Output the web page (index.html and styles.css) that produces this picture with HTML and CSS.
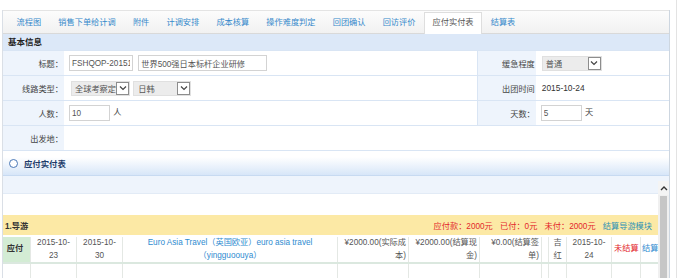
FILE: index.html
```html
<!DOCTYPE html>
<html lang="zh-CN">
<head>
<meta charset="UTF-8">
<title>应付实付表</title>
<link rel="stylesheet" href="styles.css">
</head>
<body>
<div class="page">
    <div class="tabs">
        <span class="tab">流程图</span>
        <span class="tab">销售下单给计调</span>
        <span class="tab">附件</span>
        <span class="tab">计调安排</span>
        <span class="tab">成本核算</span>
        <span class="tab">操作难度判定</span>
        <span class="tab">回团确认</span>
        <span class="tab">回访评价</span>
        <span class="tab active">应付实付表</span>
        <span class="tab">结算表</span>
    </div>

    <div class="panel-title">基本信息</div>
    <table class="form">
        <tr>
            <td class="lbl">标题：</td>
            <td class="val">
                <input class="ipt w-code" type="text" value="FSHQOP-201510">
                <input class="ipt w-name" type="text" value="世界500强日本标杆企业研修">
            </td>
            <td class="lbl lbl-r">缓急程度</td>
            <td class="val">
                <span class="sel w-level"><span class="sel-text">普通</span><span class="arrow"><svg width="8" height="6" viewBox="0 0 8 6"><path d="M1 1.5 L4 4.5 L7 1.5" fill="none" stroke="#444" stroke-width="1.2"/></svg></span></span>
            </td>
        </tr>
        <tr>
            <td class="lbl">线路类型：</td>
            <td class="val">
                <span class="sel w-type"><span class="sel-text">全球考察定制</span><span class="arrow"><svg width="8" height="6" viewBox="0 0 8 6"><path d="M1 1.5 L4 4.5 L7 1.5" fill="none" stroke="#444" stroke-width="1.2"/></svg></span></span>
                <span class="sel w-area"><span class="sel-text">日韩</span><span class="arrow"><svg width="8" height="6" viewBox="0 0 8 6"><path d="M1 1.5 L4 4.5 L7 1.5" fill="none" stroke="#444" stroke-width="1.2"/></svg></span></span>
            </td>
            <td class="lbl lbl-r">出团时间</td>
            <td class="val date">2015-10-24</td>
        </tr>
        <tr>
            <td class="lbl">人数：</td>
            <td class="val"><input class="ipt w-num" type="text" value="10"> 人</td>
            <td class="lbl lbl-r">天数：</td>
            <td class="val"><input class="ipt w-num" type="text" value="5"> 天</td>
        </tr>
        <tr>
            <td class="lbl">出发地：</td>
            <td class="val" colspan="3"></td>
        </tr>
    </table>

    <div class="sub-title"><span class="ring"></span>应付实付表</div>

    <div class="scroll-area">
        <div class="scroll-content">
            <div class="band"></div>
            <div class="blank"></div>
            <div class="group-head">
                <span class="group-name">1.导游</span>
                <span class="group-sum">
                    <span class="money">应付款：2000元</span>
                    <span class="money">已付：0元</span>
                    <span class="money">未付：2000元</span>
                    <a class="link">结算导游模块</a>
                </span>
            </div>
            <table class="pay">
                <tr>
                    <td class="kind">应付</td>
                    <td class="c-date">2015-10-<br>23</td>
                    <td class="c-date">2015-10-<br>30</td>
                    <td class="c-name">Euro Asia Travel（英国欧亚）euro asia travel<br>（yingguoouya）</td>
                    <td class="c-amt">¥2000.00(实际成<br>本)</td>
                    <td class="c-amt2">¥2000.00(结算现<br>金)</td>
                    <td class="c-amt3">¥0.00(结算签<br>单)</td>
                    <td class="c-gap"></td>
                    <td class="c-who">吉<br>红</td>
                    <td class="c-date2">2015-10-<br>24</td>
                    <td class="c-state">未结算</td>
                    <td class="c-op"><a class="link-blue">结算</a></td>
                </tr>
                <tr class="row-next">
                    <td class="kind plain"></td>
                    <td class="c-date"></td>
                    <td class="c-date"></td>
                    <td class="c-name"></td>
                    <td class="c-amt"></td>
                    <td class="c-amt2"></td>
                    <td class="c-amt3"></td>
                    <td class="c-gap"></td>
                    <td class="c-who"></td>
                    <td class="c-date2"></td>
                    <td class="c-state"></td>
                    <td class="c-op"></td>
                </tr>
            </table>
        </div>
        <div class="scrollbar">
            <div class="sb-up"><svg width="8" height="5" viewBox="0 0 8 5"><path d="M1 4 L4 1 L7 4" fill="none" stroke="#333" stroke-width="1.4"/></svg></div>
            <div class="sb-thumb"></div>
        </div>
    </div>
</div>
<div class="edge"></div>
</body>
</html>
```

FILE: styles.css
```css
body {
    margin: 0;
    font-family: "Liberation Sans", "Noto Sans CJK SC", sans-serif;
    font-size: 8.2px;
    color: #333;
    background: #fff;
    display: flex;
    height: 278px;
    overflow: hidden;
}

.page {
    width: 666px;
    margin-left: 2px;
    margin-top: 10px;
    border-left: 1px solid #dadfe6;
    border-right: 1px solid #cdd6e0;
    display: flex;
    flex-direction: column;
}

.edge {
    margin-left: 6px;
    width: 1px;
    background: #e3e3e3;
}

/* tabs */
.tabs {
    height: 22px;
    border-top: 1px solid #e4e4e4;
    border-bottom: 1px solid #d9d9d9;
    background: linear-gradient(#fcfcfc, #f1f1f1);
    display: flex;
    align-items: flex-end;
    padding-left: 5px;
}

.tab {
    height: 20px;
    line-height: 20px;
    padding: 0 7.6px;
    border: 1px solid transparent;
    border-bottom: none;
    color: #3589cb;
}

.tab.active {
    background: #fff;
    color: #555;
    border-color: #dedede;
    margin-bottom: -1px;
    height: 21px;
}

/* basic info */
.panel-title {
    height: 16px;
    line-height: 16px;
    background: #dce8f8;
    padding-left: 5px;
    font-weight: bold;
    font-size: 8.5px;
    color: #222;
}

.form {
    width: 100%;
    border-collapse: collapse;
}

.form td {
    border-top: 1px solid #d9e5f4;
    border-bottom: 1px solid #d9e5f4;
    height: 24px;
    padding: 0;
}

.form .lbl {
    width: 60px;
    background: #eef4fc;
    text-align: right;
    padding-right: 1px;
    color: #444;
}

.form .lbl-r {
    width: 57px;
    border-left: 1px solid #d9e5f4;
}

.form .val {
    padding-left: 5px;
    color: #444;
}

.form .date {
    padding-left: 6px;
    font-size: 8.4px;
    color: #333;
}

.ipt {
    box-sizing: border-box;
    height: 16px;
    border: 1px solid #d3d3d3;
    padding: 0 2px;
    font-family: "Liberation Sans", "Noto Sans CJK SC", sans-serif;
    font-size: 8.2px;
    color: #555;
    vertical-align: middle;
    margin: 0 1px 0 0;
}

.w-code { width: 64px; }
.w-name { width: 129px; margin-left: 2px; }
.w-num { width: 41px; }

.sel {
    box-sizing: border-box;
    display: inline-flex;
    align-items: center;
    height: 15px;
    background: #ececec;
    border: 1px solid #e0e0e0;
    padding-left: 3px;
    color: #555;
    vertical-align: middle;
}

.sel-text {
    flex: 1;
    min-width: 0;
    overflow: hidden;
    white-space: nowrap;
}

.sel .arrow {
    box-sizing: border-box;
    flex: none;
    width: 13px;
    height: 13px;
    background: #fff;
    border: 1px solid #8d8d8d;
    display: flex;
    align-items: center;
    justify-content: center;
}

.w-type { width: 59px; margin-left: 2px; }
.w-area { width: 58px; margin-left: 1px; padding-left: 4px; }
.w-level { width: 60px; margin-left: 1px; }

/* pay section */
.sub-title {
    height: 24px;
    display: flex;
    align-items: center;
    padding-left: 6px;
    background: linear-gradient(#fff 25%, #d7e6f8);
    border-bottom: 1px solid #c7daf1;
    font-weight: bold;
    font-size: 8.4px;
    color: #1d3c6a;
}

.ring {
    box-sizing: border-box;
    width: 9px;
    height: 9px;
    border-radius: 50%;
    border: 1.5px solid #4a78b6;
    background: #fff;
    margin-right: 6px;
}

.scroll-area {
    flex: 1;
    display: flex;
    overflow: hidden;
    background: linear-gradient(#eef4fc 0 17px, #fff 17px);
}

.scroll-content {
    flex: 1;
    overflow: hidden;
    margin-left: -3px;
}

.band {
    height: 17px;
    border-bottom: 1px solid #e2ebf6;
}

.blank {
    height: 21px;
}

.group-head {
    height: 20px;
    background: #fce9a5;
    display: flex;
    align-items: center;
    justify-content: space-between;
    padding: 0 6px 0 5px;
}

.group-name {
    font-weight: bold;
    color: #333;
}

.money {
    color: #e3262b;
    margin-right: 5px;
}

.link {
    color: #2c91b5;
}

.pay {
    border-collapse: collapse;
    margin-top: 2px;
    table-layout: fixed;
    width: 658px;
    line-height: 12.5px;
    color: #555;
}

.pay td {
    border-right: 1px solid #e4e8e4;
    border-bottom: 2px solid #dbe8df;
    height: 25px;
    padding: 0 2px;
    text-align: center;
    white-space: nowrap;
    overflow: hidden;
}

.pay .kind {
    width: 26px;
    background: #d3ecd4;
    font-weight: bold;
    color: #333;
}

.pay .kind.plain {
    background: #fff;
}

.pay .c-date { width: 41px; }
.pay .c-name { width: 210px; color: #2f8bd0; }
.pay .c-amt { width: 66px; text-align: right; }
.pay .c-amt2 { width: 66px; text-align: right; }
.pay .c-amt3 { width: 57px; text-align: right; }
.pay .c-gap { width: 2px; }
.pay .c-who { width: 13px; }
.pay .c-date2 { width: 40px; }
.pay .c-state { width: 24px; color: #e3262b; }
.pay .c-op { width: 17px; padding: 0 0 0 1px; text-align: left; border-right: none; }

.link-blue {
    color: #2f8bd0;
}

.scrollbar {
    width: 11px;
    margin-top: 5px;
    background: #f0f0f0;
    display: flex;
    flex-direction: column;
}

.sb-up {
    height: 14px;
    display: flex;
    align-items: center;
    justify-content: center;
    background: #f4f4f4;
}

.sb-thumb {
    flex: 1;
    margin: 1px 2px 0;
    background: #c6c6c6;
}
```
